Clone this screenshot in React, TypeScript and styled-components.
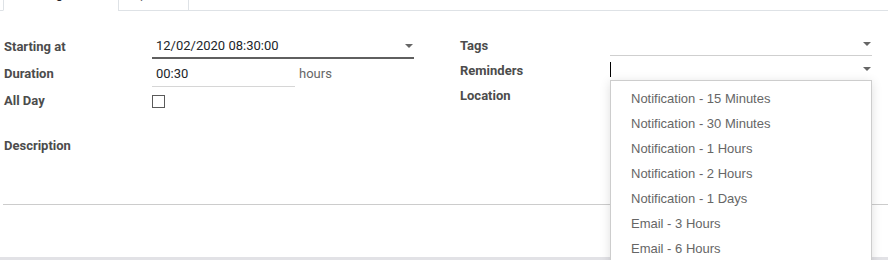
import React from 'react';
import styled, { createGlobalStyle } from 'styled-components';

const GlobalStyle = createGlobalStyle`
    html, body {
        margin: 0;
        padding: 0;
        overflow: hidden;
        background: #ffffff;
    }
    body {
        font-family: Roboto, "Noto Sans", Arial, sans-serif;
        font-size: 13px;
        color: #212529;
    }
`;

const reminderOptions = [
    'Notification - 15 Minutes',
    'Notification - 30 Minutes',
    'Notification - 1 Hours',
    'Notification - 2 Hours',
    'Notification - 1 Days',
    'Email - 3 Hours',
    'Email - 6 Hours',
    'Email - 12 Hours',
    'Email - 1 Days',
];

const App = () => {
    return (
        <Page>
            <GlobalStyle />
            <TabBar>
                <Tab active width={116}>Meeting Details</Tab>
                <Tab width={71}>Options</Tab>
            </TabBar>

            <FormBody>
                <Columns>
                    <Group labelWidth={148} rowHeight={27}>
                        <Label>Starting at</Label>
                        <SelectField strong height={23}>
                            <span>12/02/2020 08:30:00</span>
                            <Caret />
                        </SelectField>

                        <Label>Duration</Label>
                        <InlineRow>
                            <TextInput>00:30</TextInput>
                            <Unit>hours</Unit>
                        </InlineRow>

                        <Label>All Day</Label>
                        <Checkbox />
                    </Group>

                    <Group labelWidth={150} rowHeight={25} shift={-1}>
                        <Label>Tags</Label>
                        <SelectField height={22}>
                            <span />
                            <Caret />
                        </SelectField>

                        <Label>Reminders</Label>
                        <DropdownAnchor>
                            <SelectField height={22} bare>
                                <TextCursor />
                                <Caret />
                            </SelectField>
                            <Menu>
                                {reminderOptions.map((option) => (
                                    <MenuItem key={option}>{option}</MenuItem>
                                ))}
                            </Menu>
                        </DropdownAnchor>

                        <Label>Location</Label>
                        <span />
                    </Group>
                </Columns>

                <DescriptionLabel>Description</DescriptionLabel>
            </FormBody>

            <Separator />
            <BottomBand />
        </Page>
    );
};

export default App;

const Page = styled.div`
    width: 888px;
`;

const TabBar = styled.div`
    display: flex;
    align-items: flex-end;
    margin-top: -25px;
    padding-left: 3px;
    border-bottom: 1px solid #dee2e6;
`;

const Tab = styled.div<{ active?: boolean; width: number }>`
    box-sizing: border-box;
    width: ${(p) => p.width}px;
    margin-left: ${(p) => (p.active ? 0 : -1)}px;
    margin-bottom: -1px;
    padding: 8px 0 6px;
    line-height: 20px;
    text-align: center;
    border: 1px solid #dee2e6;
    border-bottom: 1px solid ${(p) => (p.active ? '#ffffff' : '#dee2e6')};
    background: #ffffff;
    color: ${(p) => (p.active ? '#212529' : '#666666')};
    white-space: nowrap;
`;

const FormBody = styled.div`
    padding: 23px 16px 0 4px;
`;

const Columns = styled.div`
    display: flex;
    gap: 46px;
`;

const Group = styled.div<{ labelWidth: number; rowHeight: number; shift?: number }>`
    display: grid;
    grid-template-columns: ${(p) => p.labelWidth}px 262px;
    grid-auto-rows: ${(p) => p.rowHeight}px;
    align-items: start;
    margin-top: ${(p) => p.shift ?? 0}px;
`;

const Label = styled.div`
    font-weight: 700;
    color: #4c4c4c;
    line-height: 20px;
    padding-top: 3px;
    white-space: nowrap;
`;

const SelectField = styled.div<{ strong?: boolean; bare?: boolean; height: number }>`
    box-sizing: content-box;
    height: ${(p) => p.height}px;
    display: flex;
    align-items: center;
    justify-content: space-between;
    padding: 0 1px 0 4px;
    line-height: 20px;
    color: #212529;
    border-bottom: ${(p) =>
        p.bare ? 'none' : p.strong ? '2px solid #5f5f5f' : '1px solid #cfcfcf'};
`;

const Caret = styled.span`
    width: 0;
    height: 0;
    border-left: 4px solid transparent;
    border-right: 4px solid transparent;
    border-top: 4px solid #666666;
`;

const TextCursor = styled.span`
    width: 1px;
    height: 15px;
    margin-left: -4px;
    background: #000000;
`;

const InlineRow = styled.div`
    display: flex;
    align-items: flex-start;
`;

const TextInput = styled.div`
    box-sizing: content-box;
    width: 139px;
    height: 22px;
    padding: 3px 0 0 4px;
    line-height: 20px;
    color: #212529;
    border-bottom: 1px solid #d6d6d6;
`;

const Unit = styled.span`
    margin-left: 4px;
    padding-top: 3px;
    line-height: 20px;
    color: #666666;
`;

const Checkbox = styled.span`
    display: block;
    box-sizing: border-box;
    width: 13px;
    height: 13px;
    margin-top: 7px;
    border: 1px solid #5a5a5a;
    background: #ffffff;
`;

const DropdownAnchor = styled.div`
    position: relative;
`;

const Menu = styled.ul`
    position: absolute;
    top: 22px;
    left: 0;
    z-index: 10;
    box-sizing: border-box;
    width: 262px;
    margin: 0;
    padding: 5px 0;
    list-style: none;
    background: #ffffff;
    border: 1px solid #cdcdcd;
    box-shadow: 0 2px 10px rgba(0, 0, 0, 0.13);
`;

const MenuItem = styled.li`
    padding: 0 20px;
    line-height: 25px;
    font-family: "Liberation Sans", Arial, sans-serif;
    font-size: 13px;
    color: #666666;
    white-space: nowrap;
`;

const DescriptionLabel = styled(Label)`
    margin-top: 18px;
`;

const Separator = styled.div`
    margin: 48px 0 0 3px;
    border-top: 1px solid #cccccc;
`;

const BottomBand = styled.div`
    margin-top: 52px;
    height: 3px;
    background: #e2e2e6;
`;
